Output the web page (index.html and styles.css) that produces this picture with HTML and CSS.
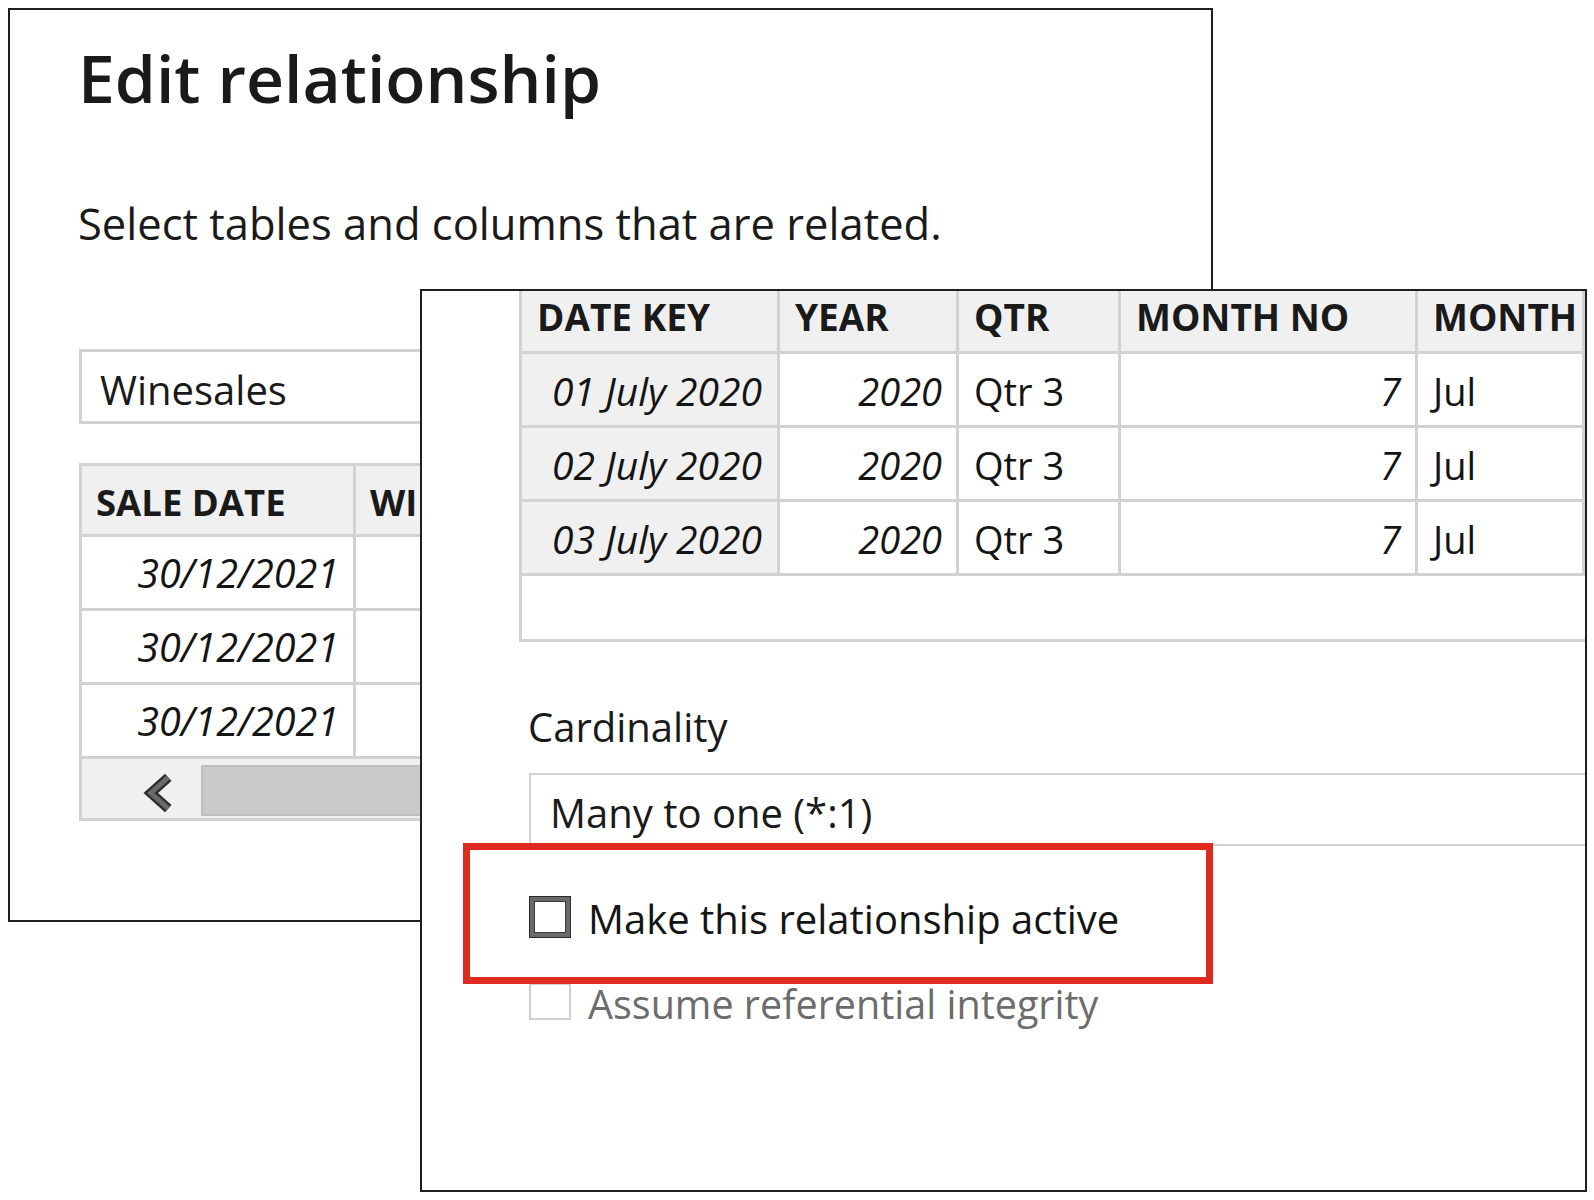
FILE: index.html
```html
<!DOCTYPE html>
<html lang="en">
<head>
<meta charset="utf-8">
<title>Edit relationship</title>
<link rel="stylesheet" href="styles.css">
</head>
<body>
  <section class="back">
    <h1 class="title">Edit relationship</h1>
    <p class="subtitle">Select tables and columns that are related.</p>
    <div class="select back-select">Winesales</div>
    <div class="bgrid">
      <div class="brow bhead"><div class="bcell bc1">SALE DATE</div><div class="bcell bc2">WINE</div></div>
      <div class="brow"><div class="bcell bc1 num">30/12/2021</div><div class="bcell bc2"></div></div>
      <div class="brow"><div class="bcell bc1 num">30/12/2021</div><div class="bcell bc2"></div></div>
      <div class="brow"><div class="bcell bc1 num">30/12/2021</div><div class="bcell bc2"></div></div>
      <div class="bscroll">
        <svg class="chev" width="34" height="40" viewBox="0 0 34 40"><polyline points="27,4 9,20 27,36" fill="none" stroke="#2e2e2e" stroke-width="10" stroke-linejoin="miter"/><polyline points="27,4 9,20 27,36" fill="none" stroke="#6a6a6a" stroke-width="5" stroke-linejoin="miter"/></svg>
        <div class="thumb"></div>
      </div>
    </div>
  </section>

  <section class="front">
    <div class="preview">
      <div class="frow fhead">
        <div class="fcell k">DATE KEY</div>
        <div class="fcell">YEAR</div>
        <div class="fcell">QTR</div>
        <div class="fcell">MONTH NO</div>
        <div class="fcell">MONTH</div>
      </div>
      <div class="frow">
        <div class="fcell k num">01 July 2020</div>
        <div class="fcell num">2020</div>
        <div class="fcell">Qtr 3</div>
        <div class="fcell num">7</div>
        <div class="fcell">Jul</div>
      </div>
      <div class="frow">
        <div class="fcell k num">02 July 2020</div>
        <div class="fcell num">2020</div>
        <div class="fcell">Qtr 3</div>
        <div class="fcell num">7</div>
        <div class="fcell">Jul</div>
      </div>
      <div class="frow">
        <div class="fcell k num">03 July 2020</div>
        <div class="fcell num">2020</div>
        <div class="fcell">Qtr 3</div>
        <div class="fcell num">7</div>
        <div class="fcell">Jul</div>
      </div>
    </div>

    <div class="label">Cardinality</div>
    <div class="select card-select">Many to one (*:1)</div>

    <div class="check">
      <span class="box"></span>
      <span class="check-text">Make this relationship active</span>
    </div>
    <div class="check disabled">
      <span class="box"></span>
      <span class="check-text">Assume referential integrity</span>
    </div>

    <div class="highlight"></div>
  </section>
</body>
</html>
```

FILE: styles.css
```css
* { box-sizing: border-box; }

html, body {
  margin: 0;
  padding: 0;
  background: #ffffff;
}

body {
  width: 1594px;
  height: 1200px;
  position: relative;
  overflow: hidden;
  font-family: "Open Sans", "Noto Sans", sans-serif;
  color: #141414;
}

/* ---------- back dialog ---------- */
.back {
  margin: 8px 0 0 8px;
  width: 1205px;
  height: 914px;
  border: 2px solid #1e1e1e;
  padding: 27px 0 0 69px;
  overflow: hidden;
}

.title {
  margin: 0 0 0 -1px;
  font-size: 66px;
  font-weight: 600;
  line-height: 80px;
  color: #1a1a1a;
}

.subtitle {
  margin: 79px 0 0 -1px;
  font-size: 43.5px;
  line-height: 56px;
  color: #1a1a1a;
}

.select {
  border: 3px solid #d2d2d2;
  font-size: 40px;
  color: #1a1a1a;
}

.back-select {
  margin-top: 97px;
  width: 900px;
  height: 75px;
  line-height: 63px;
  padding: 6px 0 0 18px;
}

.bgrid {
  margin-top: 39px;
  width: 900px;
  border: 3px solid #d2d2d2;
  border-right: none;
}

.brow {
  display: grid;
  grid-template-columns: 274px 1fr;
  height: 74px;
  border-bottom: 3px solid #d2d2d2;
}

.bhead {
  height: 71px;
  background: #f0f0f0;
}

.bcell {
  font-size: 38px;
  line-height: 68px;
  padding: 2px 16px 0 14px;
}

.bc1 { border-right: 3px solid #d2d2d2; }

.bc1.num {
  font-size: 39.5px;
  padding-right: 14px;
}

.bhead .bcell {
  font-weight: 700;
  font-size: 36.5px;
  color: #1a1a1a;
}

.num {
  font-style: italic;
  text-align: right;
}

.bscroll {
  display: flex;
  align-items: flex-start;
  height: 59px;
  background: #f0f0f0;
  padding: 6px 0 0 60px;
}

.chev {
  display: block;
  margin-top: 8px;
}

.thumb {
  margin-left: 26px;
  width: 800px;
  height: 51px;
  background: #c9c9c9;
  border: 2px solid #bdbdbd;
}

/* ---------- front dialog ---------- */
.front {
  position: absolute;
  left: 420px;
  top: 289px;
  width: 1167px;
  height: 903px;
  border: 2px solid #1e1e1e;
  background: #ffffff;
  overflow: hidden;
  padding-left: 97px;
}

.preview {
  height: 351px;
  width: 1070px;
  border-left: 3px solid #d2d2d2;
  border-bottom: 3px solid #d2d2d2;
  overflow: hidden;
}

.frow {
  display: grid;
  grid-template-columns: 258px 179px 162px 297px 167px;
  height: 74px;
  border-bottom: 3px solid #d2d2d2;
}

.fhead {
  margin-top: -11px;
  background: #f0f0f0;
}

.fcell {
  font-size: 38px;
  line-height: 68px;
  padding: 3px 16px 0 15px;
  border-right: 3px solid #d2d2d2;
  white-space: nowrap;
  overflow: hidden;
}

.fcell.k { background: #f0f0f0; }

.fcell.k.num {
  font-size: 39px;
  padding-right: 15px;
}

.fhead .fcell {
  font-weight: 700;
  font-size: 37px;
  color: #1a1a1a;
}

.frow .fcell:nth-child(2).num { padding-right: 14px; }
.frow .fcell:nth-child(4).num { padding-right: 14px; }

.label {
  margin: 60px 0 0 9px;
  font-size: 40px;
  line-height: 50px;
  color: #1a1a1a;
}

.card-select {
  margin: 21px 0 0 10px;
  width: 1100px;
  height: 73px;
  border-width: 2px;
  border-right: none;
  line-height: 63px;
  padding: 6px 0 0 19px;
}

.check {
  display: flex;
  align-items: flex-start;
  margin: 50px 0 0 10px;
  height: 42px;
}

.check + .check { margin-top: 45px; }

.box {
  flex: none;
  width: 42px;
  height: 42px;
  border: 5px solid #6a6a6a;
  outline: 1px solid #2a2a2a;
  outline-offset: -1px;
  box-shadow: inset 0 0 0 1px #3a3a3a;
  background: #ffffff;
}

.check-text {
  margin-left: 17px;
  font-size: 40px;
  line-height: 42px;
  padding-top: 2px;
  color: #141414;
  white-space: nowrap;
}

.disabled .box {
  width: 42px;
  height: 37px;
  border: 2px solid #cfcfcf;
  outline: none;
  box-shadow: none;
}

.disabled .check-text {
  color: #6c6c6c;
  margin-top: -2px;
  font-size: 39.5px;
}

.highlight {
  position: absolute;
  left: 41px;
  top: 552px;
  width: 750px;
  height: 141px;
  border: 7px solid #df2a22;
}
```
